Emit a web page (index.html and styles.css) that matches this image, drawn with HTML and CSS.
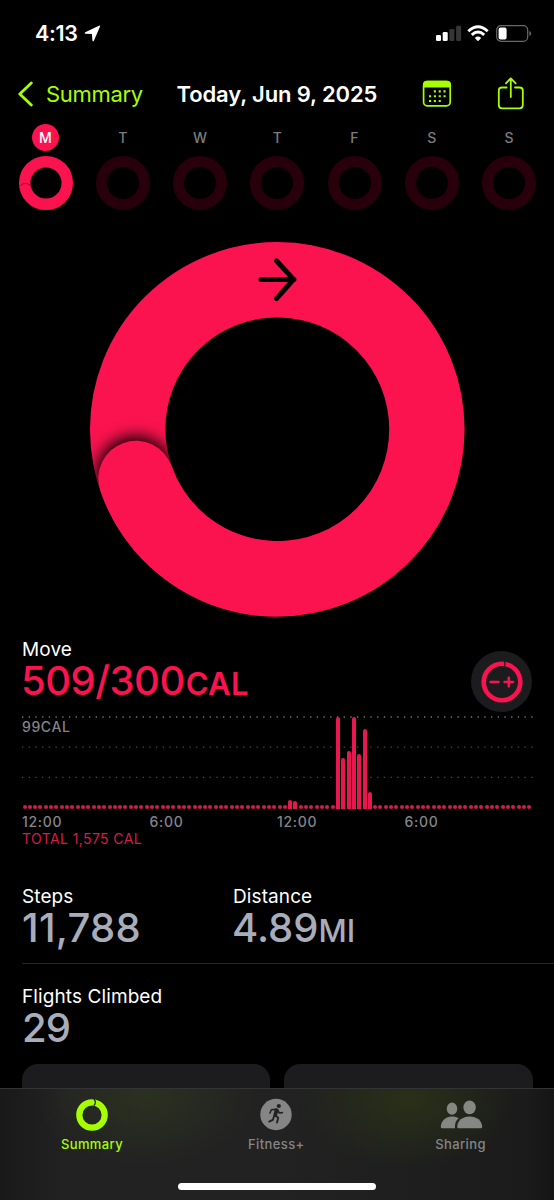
FILE: index.html
```html
<!DOCTYPE html>
<html lang="en">
<head>
    <meta charset="UTF-8">
    <meta name="viewport" content="width=device-width, initial-scale=1.0">
    <title>Fitness - Summary</title>
    <link rel="stylesheet" href="styles.css">
</head>
<body>
<div class="phone">
    <!-- Status bar -->
    <header class="status-bar">
        <div class="status-left">
            <span class="clock">4:13</span>
            <svg class="location" width="17" height="17" viewBox="0 0 17 17"><path d="M16 1.4 10 15.4Q9.2 17.1 8.4 15.4L7.9 9.1 1.6 8.7Q-.1 8.1 1.3 7.2L14.9 .7Q16.6 .1 16 1.4Z" fill="#fff"/></svg>
        </div>
        <div class="status-right">
            <svg width="26" height="17" viewBox="0 0 26 17">
                <rect x="0" y="10" width="5" height="6" rx="1.3" fill="#fff"/>
                <rect x="6.7" y="7" width="5" height="9" rx="1.3" fill="#fff"/>
                <rect x="13.4" y="4" width="5" height="12" rx="1.3" fill="#363636"/>
                <rect x="20.1" y="0.7" width="5" height="15.3" rx="1.3" fill="#363636"/>
            </svg>
            <svg class="wifi" width="22" height="17" viewBox="0 0 22 17" fill="none" stroke="#fff" stroke-width="2.9">
                <path d="M1.3 6.2Q11-2.8 20.7 6.2"/>
                <path d="M4.8 9.9Q11 4 17.2 9.9"/>
                <path d="M11 16.2 7.8 12.9Q11 10.2 14.2 12.9Z" fill="#fff" stroke="none"/>
            </svg>
            <svg width="36" height="17" viewBox="0 0 36 17">
                <rect x="0.7" y="0.7" width="31" height="15.6" rx="4.4" fill="none" stroke="#686868" stroke-width="1.2"/>
                <rect x="2.6" y="2.6" width="8" height="11.8" rx="2" fill="#fff"/>
                <path d="M33.4 6Q35.2 6.6 35.2 8.5T33.4 11Z" fill="#686868"/>
            </svg>
        </div>
    </header>

    <!-- Navigation -->
    <nav class="nav-bar">
        <a class="back" href="#">
            <svg width="16" height="26" viewBox="0 0 16 26" fill="none" stroke="#a6ff00" stroke-width="2.8" stroke-linecap="round" stroke-linejoin="round"><path d="M14.3 2 2.8 13 14.3 24"/></svg>
            <span>Summary</span>
        </a>
        <h1 class="nav-title">Today, Jun 9, 2025</h1>
        <div class="nav-actions">
            <svg width="30" height="28" viewBox="0 0 30 28">
                <rect x="1.6" y="1.6" width="26.6" height="24.2" rx="3.6" fill="none" stroke="#a6ff00" stroke-width="1.7"/>
                <path d="M1 7.4V5Q1 .8 5 .8H25Q29 .8 29 5V7.4Z" fill="#a6ff00"/>
                <g fill="none" stroke="#a6ff00" stroke-width="2.1" stroke-dasharray="2.1 2.75">
                    <path d="M11.8 11.4H24"/>
                    <path d="M7 16.2H24"/>
                    <path d="M7 21H19"/>
                </g>
            </svg>
            <svg width="28" height="34" viewBox="0 0 28 34" fill="none" stroke="#a6ff00" stroke-width="1.8" stroke-linecap="round" stroke-linejoin="round">
                <path d="M9.6 10.5H5Q1.8 10.5 1.8 13.5V28Q1.8 31.3 5 31.3H22.6Q25.8 31.3 25.8 28V13.5Q25.8 10.5 22.6 10.5H18"/>
                <path d="M13.8 20V1.5M8.9 6.3 13.8 1.3 18.7 6.3"/>
            </svg>
        </div>
    </nav>

    <!-- Week -->
    <section class="week">
        <div class="day today">
            <span class="day-name">M</span>
            <svg class="day-ring" viewBox="0 0 56 56" fill="none">
                <circle cx="28" cy="28" r="21.3" stroke="#fb134f" stroke-width="11.5"/>
                <path d="M2.4 30.6Q7.4 26 12.5 30.6" stroke="#8d0a30" stroke-width="1"/>
            </svg>
        </div>
        <div class="day"><span class="day-name">T</span><div class="day-ring empty"></div></div>
        <div class="day"><span class="day-name">W</span><div class="day-ring empty"></div></div>
        <div class="day"><span class="day-name">T</span><div class="day-ring empty"></div></div>
        <div class="day"><span class="day-name">F</span><div class="day-ring empty"></div></div>
        <div class="day"><span class="day-name">S</span><div class="day-ring empty"></div></div>
        <div class="day"><span class="day-name">S</span><div class="day-ring empty"></div></div>
    </section>

    <!-- Move ring -->
    <section class="move-ring">
        <svg width="376" height="376" viewBox="0 0 376 376" fill="none">
            <defs>
                <filter id="soft" x="-60%" y="-60%" width="220%" height="220%"><feGaussianBlur stdDeviation="8"/></filter>
                <mask id="band" maskUnits="userSpaceOnUse" x="0" y="0" width="376" height="376"><circle cx="188.3" cy="188.3" r="149.6" stroke="#fff" stroke-width="75.4"/></mask>
            </defs>
            <circle cx="188.3" cy="188.3" r="149.6" stroke="#fb134f" stroke-width="75.4"/>
            <g mask="url(#band)"><circle cx="46.6" cy="234.5" r="39" fill="#000" filter="url(#soft)"/></g>
            <path d="M188.3 337.9A149.6 149.6 0 0 1 47 237.5" stroke="#fb134f" stroke-width="75.4" stroke-linecap="round"/>
            <path d="M172 38.4H205M187.5 19.8 204.6 38.4 187.5 57.6" stroke="#000" stroke-width="5" stroke-linecap="round" stroke-linejoin="round"/>
        </svg>
    </section>

    <!-- Move -->
    <section class="move">
        <div class="move-head">
            <div>
                <div class="label">Move</div>
                <div class="value move-value">509/300<span class="unit">CAL</span></div>
            </div>
            <button class="goal-button" aria-label="Change goal">
                <svg width="42" height="42" viewBox="0 0 42 42" fill="none" stroke="#fb134f">
                    <circle cx="21" cy="21" r="18.3" stroke-width="4.6"/>
                    <path d="M23.2 .4Q25 2.8 23.2 5.2" stroke="#1c1c1e" stroke-width="1.2"/>
                    <path d="M9.6 21H17.4M23.6 21H32M27.8 16.8V25.2" stroke-width="2.6" stroke-linecap="round"/>
                </svg>
            </button>
        </div>

        <div class="chart">
            <span class="chart-max">99CAL</span>
            <svg class="grid" width="512" height="94" viewBox="0 0 512 94" fill="none" stroke-width="1.3" stroke-dasharray="1.3 5.4">
                <path d="M0 2H512" stroke="#77777a"/>
                <path d="M0 32.2H512" stroke="#4c4c4f"/>
                <path d="M0 62.4H512" stroke="#4c4c4f"/>
            </svg>
            <div class="bars" id="bars"></div>
        </div>
        <div class="hours">
            <span>12:00</span>
            <span>6:00</span>
            <span>12:00</span>
            <span>6:00</span>
        </div>
        <div class="total">TOTAL 1,575 CAL</div>
    </section>

    <!-- Stats -->
    <section class="stats">
        <div class="stats-row">
            <div class="stat">
                <div class="label">Steps</div>
                <div class="value steps">11,788</div>
            </div>
            <div class="stat">
                <div class="label">Distance</div>
                <div class="value distance">4.89<span class="unit">MI</span></div>
            </div>
        </div>
        <div class="stats-row">
            <div class="stat">
                <div class="label">Flights Climbed</div>
                <div class="value flights">29</div>
            </div>
        </div>
    </section>

    <section class="cards">
        <div class="card"></div>
        <div class="card"></div>
    </section>

    <!-- Tab bar -->
    <footer class="tab-bar">
        <a class="tab active" href="#">
            <svg width="34" height="34" viewBox="0 0 34 34" fill="none">
                <circle cx="17" cy="17" r="12.7" stroke="#a6ff00" stroke-width="6.2"/>
                <path d="M18.8 1Q22 4.2 18.8 7.8" stroke="#2a2d22" stroke-width="1.3"/>
            </svg>
            <span>Summary</span>
        </a>
        <a class="tab" href="#">
            <svg width="34" height="34" viewBox="0 0 34 34">
                <circle cx="17" cy="16.5" r="15.7" fill="#858585"/>
                <circle cx="19.8" cy="8" r="2.1" fill="#222"/>
                <g fill="none" stroke="#222" stroke-linecap="round" stroke-linejoin="round">
                    <path d="M17.6 12.2 16.2 17" stroke-width="3.8"/>
                    <path d="M16.8 11.4 12.4 11.8 11 15M18.7 12.3 20.4 15 23.4 14.6" stroke-width="1.6"/>
                    <path d="M16.4 17.4 19.2 19.8 18 24.6M15.2 18 13.8 21.8 10.2 23.6" stroke-width="1.9"/>
                </g>
            </svg>
            <span>Fitness+</span>
        </a>
        <a class="tab" href="#">
            <svg width="44" height="34" viewBox="0 0 44 34" fill="#858783">
                <ellipse cx="13" cy="10.7" rx="5.3" ry="6.1"/>
                <ellipse cx="30.6" cy="9.4" rx="6.2" ry="6.9"/>
                <path d="M1.8 28.9C2 22.9 6.6 18.5 13 18.5 15.6 18.5 17.8 19.1 19.7 20.2 17 22.5 15.6 25.5 16 30.3H3.2Q1.8 30.3 1.8 28.9Z"/>
                <path d="M18.2 28.7C18.6 22.7 23.2 18.5 30.6 18.5S42.8 22.7 43.2 28.7Q43.2 30.3 41.8 30.3H19.6Q18.2 30.3 18.2 28.7Z"/>
            </svg>
            <span>Sharing</span>
        </a>
        <div class="home-indicator"></div>
    </footer>
</div>

<script>
    // active calories per 15 minutes, bar height in px
    const active = { 50: 9, 51: 8, 59: 92, 60: 51, 61: 58, 62: 92, 63: 55, 64: 80, 65: 17 };
    const bars = document.getElementById('bars');
    for (let i = 0; i < 96; i++) {
        const bar = document.createElement('span');
        bar.className = active[i] ? 'bar' : 'bar idle';
        if (active[i]) bar.style.height = active[i] + 'px';
        bars.appendChild(bar);
    }
</script>
</body>
</html>
```
FILE: styles.css
```css
:root {
    --move: #fb134f;
    --green: #a6ff00;
    --gray: #858588;
    --value: #a9adba;
}

* {
    box-sizing: border-box;
}

body {
    margin: 0;
    background: #000;
    color: #fff;
    font-family: Inter, "Liberation Sans", sans-serif;
}

svg {
    display: block;
    flex: none;
}

a {
    color: inherit;
    text-decoration: none;
}

.phone {
    position: relative;
    width: 554px;
    height: 1200px;
    overflow: hidden;
}

/* Status bar */
.status-bar {
    display: flex;
    justify-content: space-between;
    height: 66px;
    padding: 25px 22px 0 35px;
}

.status-left,
.status-right {
    display: flex;
    align-items: flex-start;
}

.status-left {
    gap: 6px;
}

.clock {
    font-size: 21.5px;
    line-height: 17px;
    font-weight: 600;
    letter-spacing: -0.3px;
}

.wifi {
    margin: 0 7px 0 5px;
}

/* Navigation */
.nav-bar {
    display: flex;
    align-items: center;
    height: 56px;
    padding: 0 28px 0 17px;
}

.back {
    display: flex;
    align-items: center;
    gap: 13px;
    width: 159.5px;
    color: var(--green);
    font-size: 22px;
    letter-spacing: -0.3px;
}

.nav-title {
    margin: 0;
    width: 245px;
    font-size: 22px;
    font-weight: 600;
    letter-spacing: -0.12px;
    white-space: nowrap;
}

.nav-actions {
    display: flex;
    align-items: center;
    justify-content: space-between;
    width: 103.5px;
}

/* Week */
.week {
    display: flex;
    justify-content: space-between;
    height: 118px;
    padding: 2px 17px 0 17.5px;
}

.day {
    display: flex;
    flex-direction: column;
    align-items: center;
    gap: 4px;
    width: 56px;
}

.day-name {
    width: 27px;
    height: 27px;
    line-height: 28px;
    border-radius: 50%;
    color: #7c7c7e;
    font-size: 14px;
    font-weight: 500;
    text-align: center;
}

.today .day-name {
    background: var(--move);
    color: #fff;
}

.day-ring {
    width: 56px;
    height: 56px;
}

.day-ring.empty {
    width: 54px;
    height: 54px;
    margin-top: 1px;
    border: 11.5px solid #28000c;
    border-radius: 50%;
}

/* Move ring */
.move-ring {
    display: flex;
    justify-content: center;
    height: 398px;
    padding-top: 1px;
}

/* Move */
.move {
    height: 247px;
    padding: 0 22px;
}

.move-head {
    display: flex;
    justify-content: space-between;
    height: 77px;
}

.label {
    font-size: 19px;
    line-height: 23px;
    letter-spacing: 0.1px;
}

.value {
    color: var(--value);
    font-size: 40px;
    line-height: 40px;
    font-weight: 500;
    white-space: nowrap;
}

.unit {
    font-size: 31px;
}

.move-value {
    margin-left: -1px;
    color: var(--move);
    letter-spacing: -0.5px;
}

.move-value .unit {
    margin-left: 1px;
    font-weight: 600;
    letter-spacing: 0.3px;
}

.steps {
    letter-spacing: 0.3px;
}

.distance {
    margin-left: -1px;
}

.flights {
    letter-spacing: -1px;
}

.goal-button {
    display: flex;
    align-items: center;
    justify-content: center;
    width: 61px;
    height: 61px;
    margin-top: 13px;
    padding: 0;
    border: none;
    border-radius: 50%;
    background: #1c1c1e;
}

.chart {
    display: grid;
    height: 94px;
}

.chart > * {
    grid-area: 1 / 1;
}

.chart-max {
    padding-top: 4px;
    color: var(--gray);
    font-size: 14px;
    line-height: 16px;
    font-weight: 500;
    letter-spacing: 0.6px;
}

.bars {
    display: flex;
    align-items: flex-end;
    justify-content: space-between;
    width: 509.5px;
    margin-left: 0.5px;
}

.bar {
    width: 4px;
    border-radius: 2px 2px 0 0;
    background: #e81750;
}

.bar.idle {
    height: 4px;
    border-radius: 50%;
    background: #d41c4d;
}

.hours {
    display: flex;
    margin-top: 4px;
    color: var(--gray);
    font-size: 14px;
    line-height: 18px;
    font-weight: 500;
    letter-spacing: 0.7px;
}

.hours span {
    width: 127.7px;
}

.total {
    color: #d41c4d;
    font-size: 14px;
    line-height: 16px;
    letter-spacing: 0.4px;
}

/* Stats */
.stats-row {
    display: flex;
    height: 101px;
    padding-left: 22px;
}

.stat {
    width: 211px;
}

.stats-row:first-child {
    height: 79px;
    margin-bottom: 21px;
    background: linear-gradient(#262628, #262628) 22px 100% / 100% 1px no-repeat;
}

/* Cards */
.cards {
    display: flex;
    gap: 14px;
    padding: 0 21.5px;
    margin-top: -22.5px;
}

.card {
    flex: 1;
    height: 120px;
    border-radius: 16px;
    background: #1c1c1e;
}

.tab-bar {
    position: absolute;
    left: 0;
    right: 0;
    bottom: 0;
    display: flex;
    height: 112px;
    padding-top: 8.5px;
    border-top: 1px solid #343436;
    background:
        radial-gradient(ellipse 110px 70px at 145px 6px, #2b3120, transparent),
        radial-gradient(ellipse 110px 70px at 408px 10px, #2a3018, transparent),
        linear-gradient(90deg, #191919, #222 12%, #222 50%, #1a1b1a 95%, #151515);
}

.tab {
    display: flex;
    flex-direction: column;
    align-items: center;
    gap: 4px;
    width: 184.6px;
    margin-left: -0.3px;
    color: #858585;
    font-size: 13px;
    line-height: 16px;
    font-weight: 500;
    letter-spacing: 0.4px;
}

.tab.active {
    color: var(--green);
}

.home-indicator {
    position: absolute;
    left: 178px;
    bottom: 10.5px;
    width: 198px;
    height: 7px;
    border-radius: 4px;
    background: #fff;
}
```
